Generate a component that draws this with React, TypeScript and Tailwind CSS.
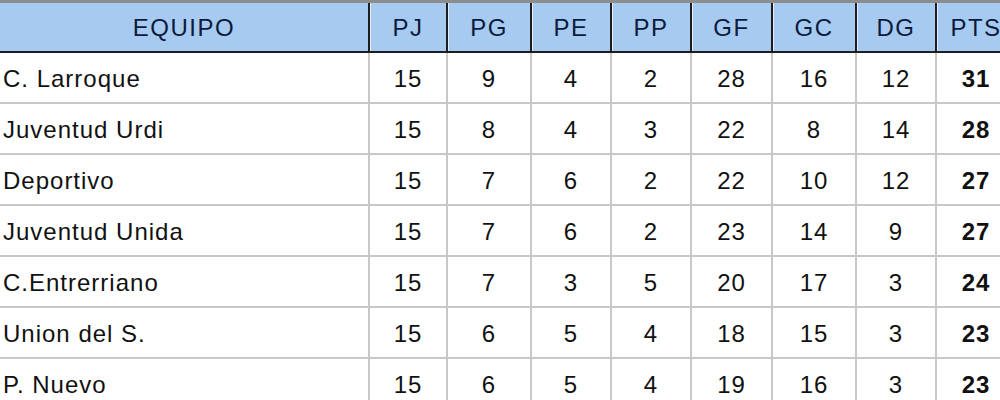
import React from 'react';

const cols = ['PJ', 'PG', 'PE', 'PP', 'GF', 'GC', 'DG', 'PTS'];

const rows = [
  { team: 'C. Larroque', stats: [15, 9, 4, 2, 28, 16, 12, 31] },
  { team: 'Juventud Urdi', stats: [15, 8, 4, 3, 22, 8, 14, 28] },
  { team: 'Deportivo', stats: [15, 7, 6, 2, 22, 10, 12, 27] },
  { team: 'Juventud Unida', stats: [15, 7, 6, 2, 23, 14, 9, 27] },
  { team: 'C.Entrerriano', stats: [15, 7, 3, 5, 20, 17, 3, 24] },
  { team: 'Union del S.', stats: [15, 6, 5, 4, 18, 15, 3, 23] },
  { team: 'P. Nuevo', stats: [15, 6, 5, 4, 19, 16, 3, 23] },
];

const grid = 'grid grid-cols-[370px_78px_84px_80px_80px_81px_84px_80px_80px]';

const App = () => {
  return (
    <div
      className="w-[1000px] h-[400px] overflow-hidden bg-white"
      style={{ fontFamily: '"Liberation Sans", Arial, sans-serif' }}
    >
      <div className="w-[1017px]">
        <div className={`${grid} h-[53px] border-t-[3px] border-[#8c8c8c] bg-[#a6caf0] border-b-2 border-b-[#1e1e1e] text-[24px] tracking-[1.5px] text-[#0c1a3c]`}>
          <div className="flex items-center justify-center pt-[2px] border-r-2 border-[#1e1e1e]">EQUIPO</div>
          {cols.map((c) => (
            <div
              key={c}
              className="flex items-center justify-center pt-[2px] border-r-2 border-[#1e1e1e] shadow-[inset_1px_0_0_#e4eefa]"
            >
              {c}
            </div>
          ))}
        </div>

        {rows.map((r) => (
          <div key={r.team} className={`${grid} h-[51px] border-b-2 border-[#c8c8c8] text-[24px] tracking-[1px] text-[#111]`}>
            <div className="flex items-center pl-[3px] pt-[3px] border-r-2 border-[#c8c8c8]">{r.team}</div>
            {r.stats.map((s, i) => (
              <div
                key={i}
                className={`flex items-center justify-center pt-[3px] border-r-2 border-[#c8c8c8] ${i === 7 ? 'font-bold' : ''}`}
              >
                {s}
              </div>
            ))}
          </div>
        ))}
      </div>
    </div>
  );
};

export default App;
